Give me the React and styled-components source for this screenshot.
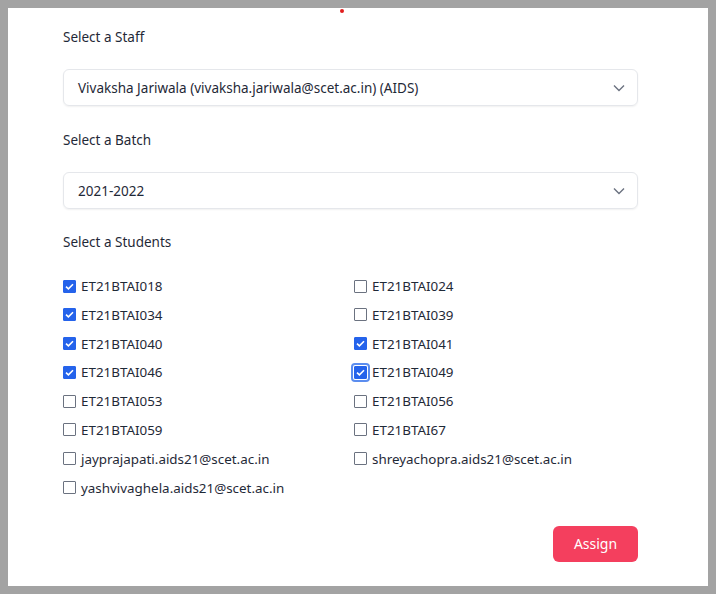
import styled, { createGlobalStyle } from "styled-components";

const Global = createGlobalStyle`
  html, body { margin: 0; padding: 0; background: #a3a3a3; }
  body { padding: 8px; font-family: "Noto Sans", "Open Sans", sans-serif; }
  * { box-sizing: border-box; }
`;

const Panel = styled.div`
  position: relative;
  width: 700px;
  height: 578px;
  background: #fff;
  padding: 19px 70px 0 55px;
  color: #1f2937;
`;

const Dot = styled.span`
  position: absolute;
  top: 1px;
  left: 332px;
  width: 4px;
  height: 4px;
  border-radius: 50%;
  background: #e11d1d;
`;

const Label = styled.div`
  font-size: 13.5px;
  line-height: 20px;
  margin-top: ${(p) => p.$top}px;
  color: #1f2937;
`;

const SelectBox = styled.div`
  margin-top: ${(p) => p.$top}px;
  height: 37px;
  border: 1px solid #e5e7eb;
  border-radius: 6px;
  box-shadow: 0 1px 2px rgba(0, 0, 0, 0.06);
  display: flex;
  align-items: center;
  justify-content: space-between;
  padding: 0 12px 0 14px;
  font-size: 13.5px;
  color: #1f2937;
`;

const Grid = styled.div`
  margin-top: 24px;
  display: grid;
  grid-template-columns: 291px 1fr;
  row-gap: 8.8px;
`;

const Item = styled.label`
  display: flex;
  align-items: center;
  height: 20px;
  font-size: 13.4px;
  color: #1f2937;
`;

const Box = styled.span`
  width: 13px;
  height: 13px;
  margin-right: 5px;
  border-radius: 1px;
  display: inline-flex;
  align-items: center;
  justify-content: center;
  background: ${(p) => (p.$checked ? "#2563eb" : "#fff")};
  border: 1px solid ${(p) => (p.$checked ? "#2563eb" : "#6b7280")};
  outline: ${(p) => (p.$focus ? "2px solid #5b8def" : "none")};
  outline-offset: 1px;
`;

const Footer = styled.div`
  display: flex;
  justify-content: flex-end;
  margin-top: 28px;
`;

const Button = styled.button`
  width: 85px;
  height: 36px;
  border: none;
  border-radius: 6px;
  background: #f43f5e;
  color: #fff;
  font-family: inherit;
  font-size: 14px;
`;

const Chevron = () => (
  <svg width="12" height="8" viewBox="0 0 12 8" fill="none">
    <path d="M1 1.5L6 6.5L11 1.5" stroke="#6b7280" strokeWidth="1.4" />
  </svg>
);

const Check = () => (
  <svg width="9" height="7" viewBox="0 0 9 7" fill="none">
    <path d="M1 3.6L3.4 5.8L8 1.2" stroke="#fff" strokeWidth="1.6" />
  </svg>
);

const students = [
  ["ET21BTAI018", true],
  ["ET21BTAI024", false],
  ["ET21BTAI034", true],
  ["ET21BTAI039", false],
  ["ET21BTAI040", true],
  ["ET21BTAI041", true],
  ["ET21BTAI046", true],
  ["ET21BTAI049", true, true],
  ["ET21BTAI053", false],
  ["ET21BTAI056", false],
  ["ET21BTAI059", false],
  ["ET21BTAI67", false],
  ["jayprajapati.aids21@scet.ac.in", false],
  ["shreyachopra.aids21@scet.ac.in", false],
  ["yashvivaghela.aids21@scet.ac.in", false],
];

export default function App() {
  return (
    <>
      <Global />
      <Panel>
        <Dot />
        <Label $top={0}>Select a Staff</Label>
        <SelectBox $top={22}>
          <span>Vivaksha Jariwala (vivaksha.jariwala@scet.ac.in) (AIDS)</span>
          <Chevron />
        </SelectBox>
        <Label $top={24}>Select a Batch</Label>
        <SelectBox $top={22}>
          <span>2021-2022</span>
          <Chevron />
        </SelectBox>
        <Label $top={23}>Select a Students</Label>
        <Grid>
          {students.map(([name, checked, focus]) => (
            <Item key={name}>
              <Box $checked={checked} $focus={focus}>
                {checked && <Check />}
              </Box>
              {name}
            </Item>
          ))}
        </Grid>
        <Footer>
          <Button>Assign</Button>
        </Footer>
      </Panel>
    </>
  );
}
